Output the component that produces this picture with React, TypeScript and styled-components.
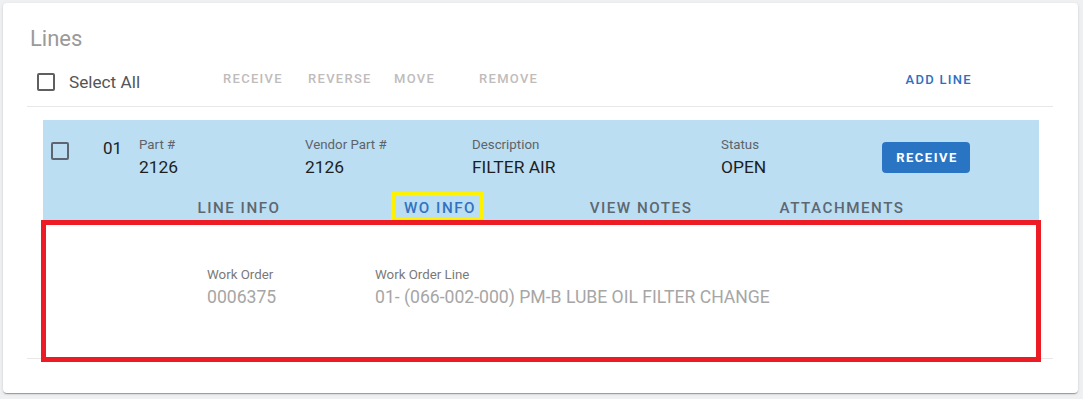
import React from "react";
import styled, { createGlobalStyle } from "styled-components";

const GlobalStyle = createGlobalStyle`
  html, body {
    margin: 0;
    padding: 0;
    background: #eef0f2;
    font-family: Roboto, "Liberation Sans", Arial, sans-serif;
  }
  * { box-sizing: border-box; }
`;

const Page = styled.div`
  padding: 3px;
`;

const Card = styled.section`
  width: 1075px;
  background: #ffffff;
  border-radius: 4px;
  box-shadow: 0px 2px 1px -1px rgba(0, 0, 0, 0.2), 0px 1px 1px 0px rgba(0, 0, 0, 0.14),
    0px 1px 3px 0px rgba(0, 0, 0, 0.12);
  padding: 22px 25px 34px 24px;
`;

const Title = styled.h2`
  margin: 0;
  font-size: 22px;
  line-height: 28px;
  font-weight: 400;
  color: #9a9a9a;
  padding-left: 3px;
`;

const Toolbar = styled.div`
  margin-top: 11px;
  height: 43px;
  padding-bottom: 6px;
  border-bottom: 1px solid #e8e8e8;
  display: flex;
  align-items: center;
`;

const SelectAllGroup = styled.label`
  width: 196px;
  display: flex;
  align-items: center;
`;

const CheckBox = styled.span<{ $color: string; $ml: number }>`
  display: block;
  width: 18px;
  height: 18px;
  border: 2px solid ${(p) => p.$color};
  border-radius: 2px;
  margin-left: ${(p) => p.$ml}px;
  flex: none;
`;

const SelectAllText = styled.span`
  margin-left: 14px;
  font-size: 17.2px;
  line-height: 22px;
  color: #555555;
`;

const ActionGroup = styled.div`
  display: grid;
  grid-template-columns: 85px 86px 85px auto;
  margin-bottom: 6px;
`;

const TextButton = styled.button<{ $primary?: boolean }>`
  border: none;
  background: transparent;
  padding: 0;
  text-align: left;
  font-family: inherit;
  font-size: 13px;
  line-height: 18px;
  font-weight: 500;
  letter-spacing: 1.3px;
  text-transform: uppercase;
  color: ${(p) => (p.$primary ? "#2f6fbe" : "#bfbcbc")};
`;

const AddLine = styled(TextButton)`
  margin-left: auto;
  margin-right: 81px;
  margin-bottom: 5px;
`;

const LineItem = styled.div`
  margin-top: 13px;
  padding: 0 14px 0 16px;
  border-bottom: 1px solid #e8e8e8;
`;

const LineHeader = styled.div`
  background: #bbdef3;
  height: 100px;
  padding-top: 17px;
`;

const TopLine = styled.div`
  display: grid;
  grid-template-columns: 60px 36px 166px 167px 249px 161px auto;
  align-items: start;
`;

const CheckCell = styled.div`
  padding-top: 5px;
`;

const LineNumber = styled.div`
  font-size: 17px;
  line-height: 22px;
  color: #222222;
`;

const Field = styled.div`
  display: flex;
  flex-direction: column;
`;

const FieldLabel = styled.span<{ $color: string }>`
  font-size: 13.3px;
  line-height: 16px;
  color: ${(p) => p.$color};
`;

const FieldValue = styled.span<{ $color: string; $size: number }>`
  margin-top: 3px;
  font-size: ${(p) => p.$size}px;
  line-height: 22px;
  color: ${(p) => p.$color};
  white-space: nowrap;
`;

const PrimaryButton = styled.button`
  margin-top: 5px;
  width: 88px;
  height: 31px;
  border: none;
  border-radius: 4px;
  background: #2a74c4;
  color: #ffffff;
  font-family: inherit;
  font-size: 13px;
  font-weight: 700;
  letter-spacing: 1.5px;
  padding: 0 0 0 2px;
`;

const TabRow = styled.div`
  margin-top: 17px;
  margin-left: 95.5px;
  display: flex;
`;

const Tab = styled.div<{ $active?: boolean }>`
  width: 201px;
  height: 25px;
  padding-top: 3px;
  display: flex;
  justify-content: center;
  align-items: flex-start;
  font-size: 15.2px;
  line-height: 20px;
  font-weight: 500;
  letter-spacing: 1.5px;
  color: ${(p) => (p.$active ? "#3272c0" : "#5e6770")};
`;

const Highlighted = styled.span`
  position: relative;
  &::after {
    content: "";
    position: absolute;
    top: -6px;
    left: -13px;
    right: -8px;
    bottom: -4px;
    border: 4px solid #fff200;
    z-index: 1;
  }
`;

const DetailPanel = styled.div`
  position: relative;
  height: 138px;
  background: #ffffff;
  padding: 47px 0 0 164px;
  display: grid;
  grid-template-columns: 168px auto;
  align-content: start;
  &::after {
    content: "";
    position: absolute;
    top: 0;
    left: -2px;
    right: -2px;
    bottom: -4px;
    border: 5px solid #ed1c24;
    z-index: 2;
  }
`;

const fields = [
  { label: "Part #", value: "2126" },
  { label: "Vendor Part #", value: "2126" },
  { label: "Description", value: "FILTER AIR" },
  { label: "Status", value: "OPEN" },
];

const tabs = ["LINE INFO", "WO INFO", "VIEW NOTES", "ATTACHMENTS"];

export default function App() {
  return (
    <>
      <GlobalStyle />
      <Page>
        <Card>
          <Title>Lines</Title>
          <Toolbar>
            <SelectAllGroup>
              <CheckBox $color="#5f5f5f" $ml={10} />
              <SelectAllText>Select All</SelectAllText>
            </SelectAllGroup>
            <ActionGroup>
              <TextButton disabled>Receive</TextButton>
              <TextButton disabled>Reverse</TextButton>
              <TextButton disabled>Move</TextButton>
              <TextButton disabled>Remove</TextButton>
            </ActionGroup>
            <AddLine $primary>Add Line</AddLine>
          </Toolbar>
          <LineItem>
            <LineHeader>
              <TopLine>
                <CheckCell>
                  <CheckBox $color="#5d6670" $ml={8} />
                </CheckCell>
                <LineNumber>01</LineNumber>
                {fields.map((f) => (
                  <Field key={f.label}>
                    <FieldLabel $color="#5f6368">{f.label}</FieldLabel>
                    <FieldValue $color="#1e1e1e" $size={17.4}>
                      {f.value}
                    </FieldValue>
                  </Field>
                ))}
                <PrimaryButton>RECEIVE</PrimaryButton>
              </TopLine>
              <TabRow>
                {tabs.map((t) => (
                  <Tab key={t} $active={t === "WO INFO"}>
                    {t === "WO INFO" ? <Highlighted>{t}</Highlighted> : t}
                  </Tab>
                ))}
              </TabRow>
            </LineHeader>
            <DetailPanel>
              <Field>
                <FieldLabel $color="#7a7a7a">Work Order</FieldLabel>
                <FieldValue $color="#a6a6a6" $size={17.6}>
                  0006375
                </FieldValue>
              </Field>
              <Field>
                <FieldLabel $color="#7a7a7a">Work Order Line</FieldLabel>
                <FieldValue $color="#a6a6a6" $size={17.6}>
                  01- (066-002-000) PM-B LUBE OIL FILTER CHANGE
                </FieldValue>
              </Field>
            </DetailPanel>
          </LineItem>
        </Card>
      </Page>
    </>
  );
}
